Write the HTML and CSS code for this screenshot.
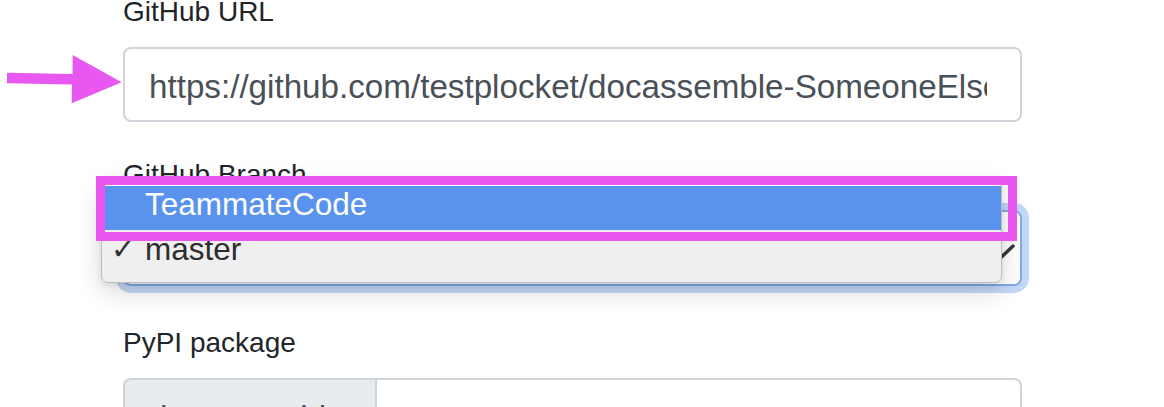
FILE: index.html
```html
<!DOCTYPE html>
<html lang="en">
<head>
<meta charset="utf-8">
<title>Package settings</title>
<link rel="stylesheet" href="styles.css">
</head>
<body>
<div class="page">
  <div class="form-group group-url">
    <label class="form-label" for="url">GitHub URL</label>
    <input class="form-control" id="url" type="text" value="https://github.com/testplocket/docassemble-SomeoneElse">
  </div>
  <div class="form-group group-branch">
    <label class="form-label" for="branch">GitHub Branch</label>
    <div class="select-wrap">
      <select class="form-select" id="branch">
        <option>master</option>
        <option>TeammateCode</option>
      </select>
      <svg class="chevron" width="40" height="24" viewBox="0 0 40 24"><polyline points="7,6 18.5,17 30,6" fill="none" stroke="#343a40" stroke-width="3.5" stroke-linecap="round" stroke-linejoin="round"/></svg>
    </div>
  </div>
  <div class="form-group group-pypi">
    <label class="form-label" for="pypi">PyPI package</label>
    <div class="input-group">
      <span class="input-group-text">docassemble-</span>
      <input class="form-control group-input" id="pypi" type="text" value="">
    </div>
  </div>
</div>

<div class="menu">
  <div class="menu-item active"><span class="check"></span><span>TeammateCode</span></div>
  <div class="menu-item"><span class="check">✓</span><span>master</span></div>
</div>

<div class="highlight-box"></div>

<svg class="pointer" width="130" height="110" viewBox="0 0 130 110">
  <polygon points="7,72.7 72.5,74 72.7,55 121.7,82.3 71.7,103.3 72,84.5 7,83.3" fill="#e957f1"/>
</svg>
</body>
</html>
```

FILE: styles.css
```css
html, body {
  margin: 0;
  padding: 0;
  overflow: hidden;
  background: #fff;
}

body {
  display: flow-root;
  position: relative;
  width: 1164px;
  height: 407px;
  font-family: "Liberation Sans", Arial, sans-serif;
  color: #212529;
}

.page {
  margin-top: -9px;
  padding-left: 123px;
  width: 899px;
  display: flex;
  flex-direction: column;
}

.form-group {
  display: flex;
  flex-direction: column;
}

.group-url { margin-bottom: 32px; }
.group-branch { margin-bottom: 36px; }

.form-label {
  font-size: 28px;
  line-height: 42px;
  margin-bottom: 14px;
  color: #212529;
}

.form-control {
  box-sizing: border-box;
  width: 899px;
  height: 75px;
  padding: 4px 33px 0 24px;
  border: 2px solid #ced4da;
  border-radius: 8px;
  font-family: "Liberation Sans", Arial, sans-serif;
  font-size: 33.2px;
  color: #495057;
  background: #fff;
  outline: none;
}

.select-wrap {
  position: relative;
  width: 899px;
  height: 76px;
}

.form-select {
  -webkit-appearance: none;
  appearance: none;
  box-sizing: border-box;
  width: 899px;
  height: 76px;
  padding: 0 60px 0 24px;
  border: 2px solid #80aaea;
  border-radius: 8px;
  box-shadow: 0 0 0 7px rgba(40, 110, 230, 0.28);
  font-family: "Liberation Sans", Arial, sans-serif;
  font-size: 33px;
  color: #495057;
  background: #fff;
  outline: none;
}

.chevron {
  position: absolute;
  left: 860px;
  top: 30px;
}

.input-group {
  display: flex;
  width: 899px;
  height: 75px;
}

.input-group-text {
  box-sizing: border-box;
  display: flex;
  align-items: center;
  height: 75px;
  width: 252px;
  padding: 4px 24px 0 24px;
  border: 2px solid #ced4da;
  border-right: none;
  border-radius: 8px 0 0 8px;
  background: #e9ecef;
  font-size: 33.2px;
  color: #495057;
  white-space: nowrap;
  overflow: hidden;
}

.group-input {
  flex: 1;
  width: auto;
  border-radius: 0 8px 8px 0;
}

/* native popup menu overlay */
.menu {
  position: absolute;
  left: 101px;
  top: 179px;
  width: 901px;
  box-sizing: border-box;
  padding: 6px 0 8px 0;
  background: #efefef;
  border: 1px solid #bdbdbd;
  border-radius: 7px;
  box-shadow: 0 8px 26px rgba(0, 0, 0, 0.16), 0 2px 6px rgba(0, 0, 0, 0.08);
}

.menu-item {
  display: flex;
  align-items: flex-start;
  height: 44px;
  box-sizing: border-box;
  padding-top: 1px;
  font-size: 31.5px;
  line-height: 36px;
  color: #2d2d2d;
}

.menu-item.active {
  padding-top: 0;
  background: #5a93ee;
  color: #fff;
  box-shadow: 0 -2px 0 #fbfbfb;
}

.check {
  box-sizing: border-box;
  width: 43px;
  padding-left: 9px;
  font-family: "DejaVu Sans", sans-serif;
  font-size: 29px;
  line-height: 36px;
  color: #333;
  flex-shrink: 0;
}

.highlight-box {
  position: absolute;
  left: 96px;
  top: 176px;
  width: 921px;
  height: 65px;
  box-sizing: border-box;
  border: 9px solid #e957f1;
}

.pointer {
  position: absolute;
  left: 0;
  top: 0;
}
```
